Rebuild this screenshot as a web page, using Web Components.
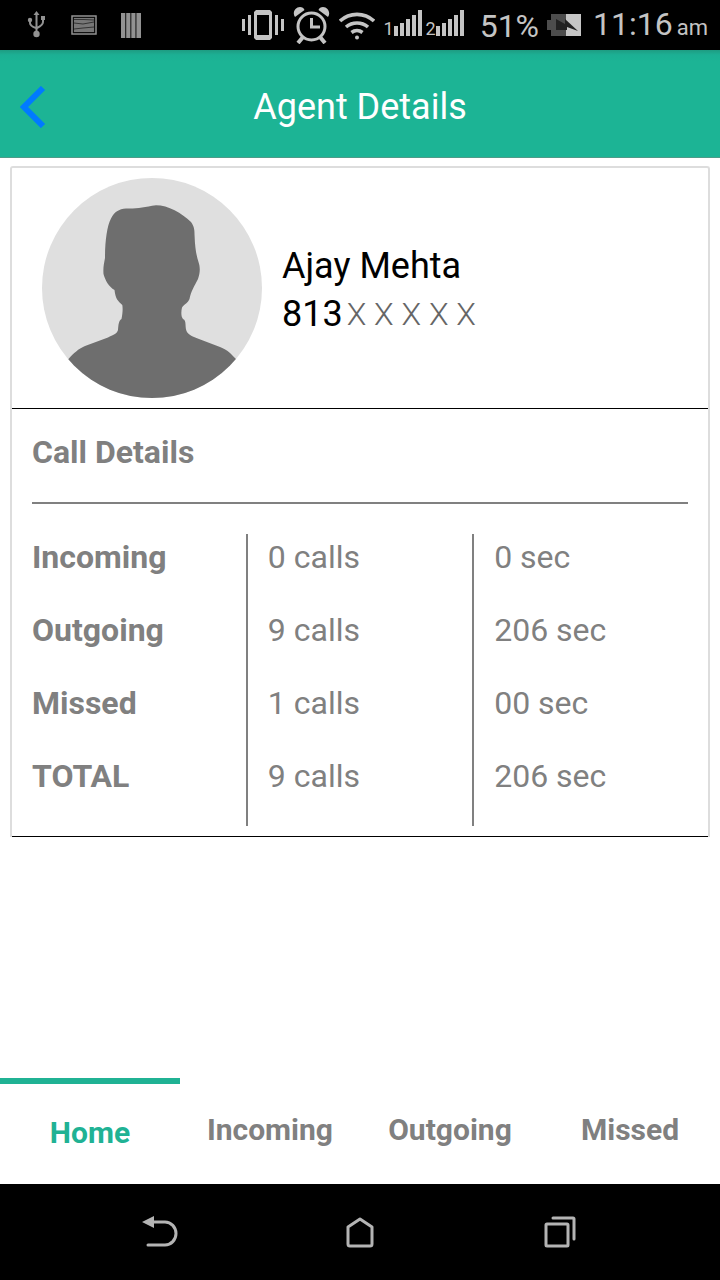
<!DOCTYPE html>
<html lang="en">
<head>
<meta charset="utf-8">
<meta name="viewport" content="width=device-width, initial-scale=1">
<title>Agent Details</title>
<style>
  html, body { margin: 0; }
  body { font-family: Roboto, "Liberation Sans", sans-serif; background: #fff; color: #000; }
</style>
</head>
<body>
<agent-app>
  <status-bar slot="status"></status-bar>
  <app-header slot="header">Agent Details</app-header>
  <agent-card>
    <agent-profile slot="profile">
      <span slot="name">Ajay Mehta</span>
      <span slot="prefix">813</span>
      <span slot="mask">X X X X X</span>
    </agent-profile>
    <call-details>Call Details</call-details>
  </agent-card>
  <tab-bar slot="tabs">
    <tab-item active>Home</tab-item>
    <tab-item>Incoming</tab-item>
    <tab-item>Outgoing</tab-item>
    <tab-item>Missed</tab-item>
  </tab-bar>
  <system-nav slot="system"></system-nav>
</agent-app>

<script>
function define(name, html) {
  const template = document.createElement('template');
  template.innerHTML = html;
  customElements.define(name, class extends HTMLElement {
    constructor() {
      super();
      this.attachShadow({ mode: 'open' }).append(template.content.cloneNode(true));
    }
  });
}

define('agent-app', `
<style>
  :host { display: flex; flex-direction: column; min-height: 100vh; }
  main { flex: 1; padding: 8px 10px; }
</style>
<slot name="status"></slot>
<slot name="header"></slot>
<main><slot></slot></main>
<slot name="tabs"></slot>
<slot name="system"></slot>`);

define('status-bar', `
<style>
  :host { display: flex; justify-content: space-between; align-items: center; height: 50px; padding: 0 12px 0 26px; background: #000; color: #c4c4c4; }
  div { display: flex; align-items: center; }
  svg { display: block; flex: none; }
  .left { gap: 24px; color: #929292; }
  .right { gap: 8px; }
  .sims { gap: 4px; }
  .sim { font-size: 18px; align-items: flex-end; height: 26px; margin-bottom: 4px; }
  .sim span { line-height: 16px; height: 15px; }
  .value { font-size: 32px; line-height: 40px; margin: 2px 0 0 8px; }
  .time { font-size: 32px; line-height: 40px; margin: 2px 0 0 4px; }
  small { font-size: 22px; margin-left: 4px; }
</style>
<div class="left">
  <svg width="21" height="28" viewBox="0 0 21 28" fill="none" stroke="currentColor" stroke-width="2" aria-label="USB">
    <path d="M10.500 3V22M4 9V12Q4 15 10 17M17 8V11Q17 14 11 17"/>
    <path d="M10.500 0L13.500 4H7.500Z" fill="currentColor" stroke="none"/>
    <circle cx="10.500" cy="23" r="3.200" fill="currentColor" stroke="none"/>
    <circle cx="4" cy="9" r="2.200" fill="currentColor" stroke="none"/>
    <path d="M15 5H19V9H15Z" fill="currentColor" stroke="none"/>
  </svg>
  <svg width="26" height="20" viewBox="0 0 26 20" aria-label="Picture">
    <rect x="1" y="1" width="24" height="18" fill="none" stroke="currentColor" stroke-width="1.500"/>
    <rect x="3" y="3" width="20" height="14" fill="#777"/>
    <path d="M3 4.500H13L23 5M3 8L12 9L23 7M3 14L12 13L23 12" fill="none" stroke="#333"/>
    <path d="M2.500 2.500H23.500V17.500H2.500Z" fill="none" stroke="#111"/>
  </svg>
  <svg width="20" height="25" viewBox="0 0 20 25" fill="currentColor" aria-label="Bars">
    <path d="M0 0H4.300V25H0ZM5.200 0H9.400V25H5.200ZM10.300 0H14.500V25H10.300ZM15.400 0H20V25H15.400Z"/>
  </svg>
</div>
<div class="right">
  <svg width="43" height="32" viewBox="0 0 43 32" fill="currentColor" aria-label="Vibrate">
    <path d="M0 10H3V22H0ZM6 6H9V26H6ZM33 6H36V26H33ZM39 10H42V22H39Z"/>
    <path fill-rule="evenodd" d="M14 1H28L30 3V29L28 31H14L12 29V3ZM15 6V26H27V6Z"/>
  </svg>
  <svg width="38" height="38" viewBox="0 0 38 38" fill="none" stroke="currentColor" aria-label="Alarm">
    <circle cx="18.500" cy="20.500" r="13.500" stroke-width="3"/>
    <path d="M18.500 12V21H27" stroke-width="3"/>
    <path d="M10 31L5 37M27 31L32 37" stroke-width="4"/>
    <path d="M2 11C-1 7 2 1 7 1C9 1 11 2 11.500 4ZM35 11C38 7 35 1 30 1C28 1 26 2 25.500 4Z" fill="currentColor" stroke="none"/>
  </svg>
  <svg width="36" height="30" viewBox="0 0 36 30" fill="none" stroke="currentColor" aria-label="Wi-Fi">
    <path d="M1 11A25 25 0 0 1 35 11M7 17A17 17 0 0 1 29 17M12.500 22.500A9 9 0 0 1 23.500 22.500" stroke-width="3.600"/>
    <circle cx="18" cy="27.500" r="2" fill="currentColor" stroke="none"/>
  </svg>
  <div class="sims">
    <div class="sim"><span>1</span>
      <svg width="28" height="26" viewBox="0 0 28 26" fill="currentColor" aria-label="Signal 1"><path d="M0 16H4V26H0ZM6 13H10V26H6ZM12 9H16V26H12ZM18 5H22V26H18ZM24 0H28V26H24Z"/></svg>
    </div>
    <div class="sim"><span>2</span>
      <svg width="28" height="26" viewBox="0 0 28 26" fill="currentColor" aria-label="Signal 2"><path d="M0 16H4V26H0ZM6 13H10V26H6ZM12 9H16V26H12ZM18 5H22V26H18ZM24 0H28V26H24Z"/></svg>
    </div>
  </div>
  <span class="value">51%</span>
  <svg width="34" height="23" viewBox="0 0 34 23" aria-label="Battery">
    <path d="M0 6H4V0H19V22H4V16H0Z" fill="#4d4d4d"/>
    <path d="M19 0H34V22H19Z" fill="#c6c6c6"/>
    <path d="M9 5L18 10V5L31 17L20 13V16L9 16Z" fill="#222"/>
  </svg>
  <span class="time">11:16<small>am</small></span>
</div>`);

define('app-header', `
<style>
  :host { display: block; }
  header { display: grid; grid-template-columns: 68px 1fr 68px; align-items: center; height: 107px; background: linear-gradient(#1e9c82, #1cb094 5px, #1cb495 12px); border-bottom: 1px solid #4f9b88; color: #fff; }
  button { border: 0; padding: 0 0 0 20px; height: 100%; background: none; color: #007aff; }
  svg { display: block; margin-top: 6px; }
  h1 { margin: 6px 0 0; font-size: 36px; line-height: 48px; font-weight: 400; text-align: center; }
</style>
<header>
  <button type="button" aria-label="Back"><svg width="26" height="42" viewBox="0 0 26 42" fill="none" stroke="currentColor" stroke-width="6"><path d="M23 2L4 21L23 40"/></svg></button>
  <h1><slot></slot></h1>
</header>`);

define('agent-card', `
<style>
  :host { display: block; border: 2px solid #ddd; border-bottom: 0; border-radius: 3px 3px 0 0; }
  section { border-bottom: 1px solid #000; }
</style>
<section><slot name="profile"></slot></section>
<section><slot></slot></section>`);

define('agent-profile', `
<style>
  :host { display: flex; align-items: center; gap: 20px; padding: 10px 30px; font-size: 36px; line-height: 48px; }
  svg { display: block; flex: none; }
  p { margin: 0; }
  .info { padding-top: 4px; }
  .phone { display: flex; gap: 4px; }
  .mask { font-size: 32px; font-weight: 300; color: #666; }
</style>
<svg width="220" height="220" viewBox="22 18 220 220" role="img" aria-label="Agent photo">
  <clipPath id="round"><circle cx="132" cy="128" r="110"/></clipPath>
  <circle cx="132" cy="128" r="110" fill="#dfdfdf"/>
  <path clip-path="url(#round)" fill="#6e6e6e" d="M48.500 199C54 193 58 189 65 186L88 177.500C93 175 97 174 98 170C98.500 165 98.500 161 101.500 159C102.500 154 103 149 102.300 145C98 141 95.500 139 94.500 130C89 127 85 120 83.500 114C83 107 84 104 85 98C85 81 87 66 91 58.500C94 52 99 49 106 48.500C117 49 124 47 136 45.200C148 45.200 162 53 171 62C174.500 67 174.500 70 174.600 76C175 88 176.500 96 178.500 102C180.500 108 180 113 178 119C174.500 126 171 131 169.500 139C168 143 164.500 144 162 147.500C161 152 161 157 163 159C167 160 164.500 168 167 172C168.500 175 174 177 179 179L200 187C208 190 211 194 216 199L236 213V242H30V213Z"/>
</svg>
<div class="info">
  <p><slot name="name"></slot></p>
  <p class="phone"><slot name="prefix"></slot><span class="mask"><slot name="mask"></slot></span></p>
</div>`);

define('call-details', `
<style>
  :host { display: block; padding: 20px 20px 10px; color: #808080; font-size: 32px; line-height: 46px; }
  h2 { margin: 0 0 30px; padding-bottom: 27px; border-bottom: 2px solid #808080; font-size: 32px; font-weight: 700; }
  table { width: 100%; table-layout: fixed; border-collapse: separate; border-spacing: 0; }
  th, td { padding: 0 0 27px; text-align: left; box-sizing: border-box; }
  th { font-weight: 700; }
  td { padding-left: 20px; border-left: 2px solid #808080; }
  .kind { width: 32.6%; }
  .count { width: 34.5%; }
</style>
<h2><slot></slot></h2>
<table>
  <colgroup><col class="kind"><col class="count"><col></colgroup>
  <tbody>
    <tr><th scope="row">Incoming</th><td>0 calls</td><td>0 sec</td></tr>
    <tr><th scope="row">Outgoing</th><td>9 calls</td><td>206 sec</td></tr>
    <tr><th scope="row">Missed</th><td>1 calls</td><td>00 sec</td></tr>
    <tr><th scope="row">TOTAL</th><td>9 calls</td><td>206 sec</td></tr>
  </tbody>
</table>`);

define('tab-bar', `
<style>
  :host { display: block; }
  nav { display: flex; height: 106px; }
  ::slotted(*) { flex: 1; }
</style>
<nav><slot></slot></nav>`);

define('tab-item', `
<style>
  :host { display: flex; flex-basis: 0; min-width: 0; }
  button { flex: 1; border: 0; margin: 0; padding: 0 0 2px; background: none; font: 700 30px/40px Roboto, "Liberation Sans", sans-serif; color: #808080; text-align: center; }
  :host([active]) button { border-top: 6px solid #20b294; color: #20b294; }
</style>
<button type="button"><slot></slot></button>`);

define('system-nav', `
<style>
  :host { display: block; background: #000; color: #b4b4b4; }
  nav { display: flex; justify-content: center; height: 96px; }
  button { width: 200px; border: 0; padding: 0; background: none; color: inherit; display: flex; align-items: center; justify-content: center; }
</style>
<nav>
  <button type="button" aria-label="Back"><svg width="36" height="32" viewBox="0 0 36 32" fill="none" stroke="currentColor" stroke-width="3" stroke-linecap="round"><path d="M11 6H23A11 11.500 0 0 1 23 29H6"/><path d="M0 6L12 0V12Z" fill="currentColor" stroke="none"/></svg></button>
  <button type="button" aria-label="Home"><svg width="28" height="32" viewBox="0 0 28 32" fill="none" stroke="currentColor" stroke-width="3" stroke-linejoin="round"><path d="M2 11L14 3L26 11V28Q26 30 24 30H4Q2 30 2 28Z"/></svg></button>
  <button type="button" aria-label="Recent apps"><svg width="32" height="32" viewBox="0 0 32 32" fill="none" stroke="currentColor" stroke-width="3" stroke-linecap="round"><rect x="2" y="8" width="22" height="22" rx="1"/><path d="M9 2H29Q30 2 30 3V23"/></svg></button>
</nav>`);
</script>
</body>
</html>
